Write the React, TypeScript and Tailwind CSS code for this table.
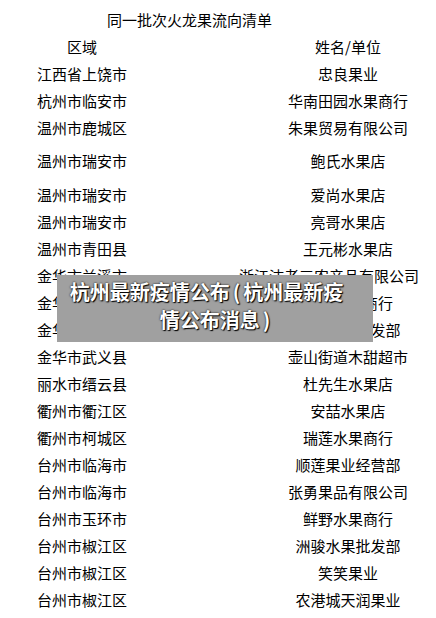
import React from "react";

type Row = { area: string; name: string; tall?: boolean; wide?: boolean };

const rows: Row[] = [
  { area: "江西省上饶市", name: "忠良果业" },
  { area: "杭州市临安市", name: "华南田园水果商行" },
  { area: "温州市鹿城区", name: "朱果贸易有限公司" },
  { area: "温州市瑞安市", name: "鲍氏水果店", tall: true },
  { area: "温州市瑞安市", name: "爱尚水果店" },
  { area: "温州市瑞安市", name: "亮哥水果店" },
  { area: "温州市青田县", name: "王元彬水果店" },
  { area: "金华市兰溪市", name: "浙江沛老三农产品有限公司", wide: true },
  { area: "金华市婺城区", name: "金鑫水果商行" },
  { area: "金华市金东区", name: "金东水果批发部" },
  { area: "金华市武义县", name: "壶山街道木甜超市" },
  { area: "丽水市缙云县", name: "杜先生水果店" },
  { area: "衢州市衢江区", name: "安喆水果店" },
  { area: "衢州市柯城区", name: "瑞莲水果商行" },
  { area: "台州市临海市", name: "顺莲果业经营部" },
  { area: "台州市临海市", name: "张勇果品有限公司" },
  { area: "台州市玉环市", name: "鲜野水果商行" },
  { area: "台州市椒江区", name: "洲骏水果批发部" },
  { area: "台州市椒江区", name: "笑笑果业" },
  { area: "台州市椒江区", name: "农港城天润果业" },
];

export default function App() {
  return (
    <div className="relative w-[436px] h-[618px] overflow-hidden bg-white text-black text-[15px] font-['Noto_Sans_CJK_SC','Noto_Sans',sans-serif]">
      <div className="pt-[6px]">
        <div className="h-[27px] leading-[27px] pl-[107px] whitespace-nowrap">同一批次火龙果流向清单</div>
        <div className="flex h-[27px] leading-[27px]">
          <div className="w-[164px] text-center">区域</div>
          <div className="ml-[96px] w-[176px] text-center">姓名/单位</div>
        </div>
        {rows.map((r, i) => (
          <div
            key={i}
            className={
              r.tall
                ? "flex h-[40px] leading-[40px]"
                : "flex h-[27px] leading-[27px]"
            }
          >
            <div className="w-[164px] text-center whitespace-nowrap">{r.area}</div>
            <div className="ml-[96px] w-[176px] flex justify-center whitespace-nowrap">
              <span className={r.wide ? "mr-[38px]" : ""}>{r.name}</span>
            </div>
          </div>
        ))}
      </div>

      <div className="absolute left-[57px] top-[275px] w-[316px] h-[67px] bg-[#a0a0a0] pt-[3px] text-white font-bold text-[20px] leading-[28px] [text-shadow:0_0_2px_#000,1px_1px_1px_#000]">
        <div className="flex justify-center whitespace-nowrap">
          <span className="mr-[17px]">
            杭州最新疫情公布<span className="mx-[3px]">(</span>杭州最新疫
          </span>
        </div>
        <div className="flex justify-center whitespace-nowrap">
          <span>
            情公布消息<span className="ml-[3px]">)</span>
          </span>
        </div>
      </div>
    </div>
  );
}
